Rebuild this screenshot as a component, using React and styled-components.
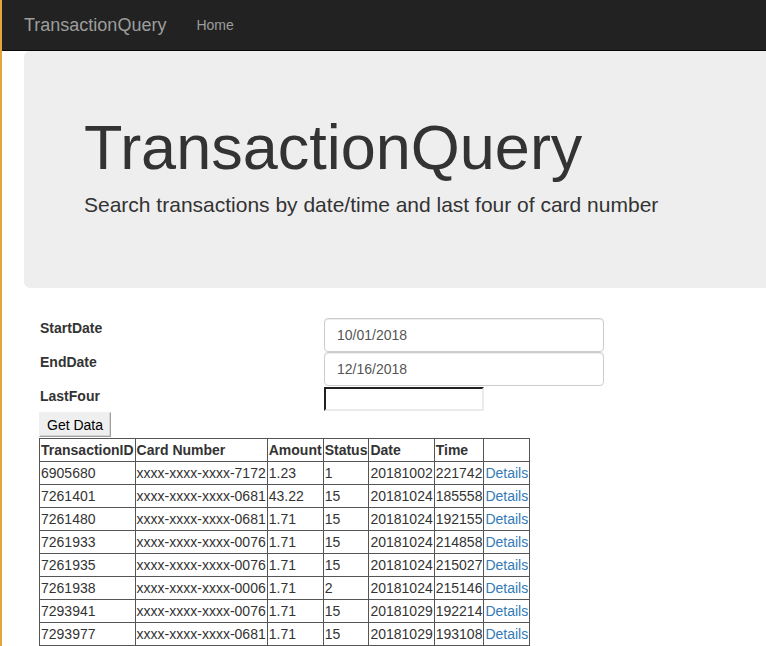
import React from 'react';
import styled, { createGlobalStyle } from 'styled-components';

const GlobalStyle = createGlobalStyle`
  html, body {
    margin: 0;
    padding: 0;
    overflow: hidden;
    background: #fff;
  }
  body {
    font-family: "Liberation Sans", Helvetica, Arial, sans-serif;
    font-size: 14px;
    line-height: 1.42857;
    color: #333;
  }
  * {
    box-sizing: border-box;
  }
`;

const rows = [
  ['6905680', 'xxxx-xxxx-xxxx-7172', '1.23', '1', '20181002', '221742'],
  ['7261401', 'xxxx-xxxx-xxxx-0681', '43.22', '15', '20181024', '185558'],
  ['7261480', 'xxxx-xxxx-xxxx-0681', '1.71', '15', '20181024', '192155'],
  ['7261933', 'xxxx-xxxx-xxxx-0076', '1.71', '15', '20181024', '214858'],
  ['7261935', 'xxxx-xxxx-xxxx-0076', '1.71', '15', '20181024', '215027'],
  ['7261938', 'xxxx-xxxx-xxxx-0006', '1.71', '2', '20181024', '215146'],
  ['7293941', 'xxxx-xxxx-xxxx-0076', '1.71', '15', '20181029', '192214'],
  ['7293977', 'xxxx-xxxx-xxxx-0681', '1.71', '15', '20181029', '193108'],
];

const App = () => {
  return (
    <Page>
      <GlobalStyle />
      <Navbar>
        <Brand href="#">TransactionQuery</Brand>
        <NavLink href="#">Home</NavLink>
      </Navbar>

      <Jumbotron>
        <h1>TransactionQuery</h1>
        <p>Search transactions by date/time and last four of card number</p>
      </Jumbotron>

      <Content>
        <QueryForm>
          <label>StartDate</label>
          <DateInput defaultValue="10/01/2018" />
          <label>EndDate</label>
          <DateInput defaultValue="12/16/2018" />
          <label>LastFour</label>
          <PlainInput />
        </QueryForm>
        <GetButton>Get Data</GetButton>

        <ResultTable>
          <thead>
            <tr>
              <th>TransactionID</th>
              <th>Card Number</th>
              <th>Amount</th>
              <th>Status</th>
              <th>Date</th>
              <th>Time</th>
              <th></th>
            </tr>
          </thead>
          <tbody>
            {rows.map((r) => (
              <tr key={r[0]}>
                {r.map((c, i) => (
                  <td key={i}>{c}</td>
                ))}
                <td>
                  <a href="#">Details</a>
                </td>
              </tr>
            ))}
          </tbody>
        </ResultTable>
      </Content>
    </Page>
  );
};

const Page = styled.div`
  min-height: 100vh;
  border-left: 2px solid #e8a43c;
`;

const Navbar = styled.nav`
  display: flex;
  align-items: center;
  height: 51px;
  padding-left: 7px;
  background: #222;
  border-bottom: 1px solid #080808;
`;

const Brand = styled.a`
  padding: 15px;
  font-size: 18px;
  line-height: 20px;
  color: #9d9d9d;
  text-decoration: none;
`;

const NavLink = styled.a`
  padding: 15px;
  font-size: 14px;
  line-height: 20px;
  color: #9d9d9d;
  text-decoration: none;
`;

const Jumbotron = styled.div`
  margin-left: 22px;
  padding: 48px 60px;
  background: #eee;
  border-radius: 6px 0 0 6px;
  height: 237px;

  h1 {
    margin: 14px 0 8px;
    font-size: 63px;
    font-weight: 500;
    line-height: 1.1;
    color: inherit;
    white-space: nowrap;
  }

  p {
    margin: 0 0 15px;
    font-size: 21px;
    font-weight: 200;
    white-space: nowrap;
  }
`;

const Content = styled.div`
  padding: 30px 0 0 37px;
`;

const QueryForm = styled.div`
  display: grid;
  grid-template-columns: 285px auto;
  justify-content: start;
  align-items: start;

  label {
    font-weight: bold;
    line-height: 20px;
    padding-left: 1px;
  }
`;

const DateInput = styled.input`
  width: 280px;
  height: 34px;
  padding: 6px 12px;
  font-family: inherit;
  font-size: 14px;
  color: #555;
  background: #fff;
  border: 1px solid #ccc;
  border-radius: 4px;
  box-shadow: inset 0 1px 1px rgba(0, 0, 0, 0.075);
  outline: none;
`;

const PlainInput = styled.input`
  width: 160px;
  height: 24px;
  margin-top: 1px;
  padding: 1px 2px;
  font-family: inherit;
  border: 2px inset #ebebeb;
  border-top-color: #767676;
  border-left-color: #767676;
  background: #fff;
  outline: none;
`;

const GetButton = styled.button`
  display: block;
  height: 25px;
  margin-top: 1px;
  margin-bottom: 1px;
  padding: 1px 7px;
  font-family: inherit;
  font-size: 14px;
  color: #000;
  background: #efefef;
  border: 1px solid #efefef;
  border-right-color: #a0a0a0;
  border-bottom-color: #a0a0a0;
  box-shadow: inset -1px -1px 0 #d4d4d4;
`;

const ResultTable = styled.table`
  border-collapse: collapse;
  font-size: 14px;

  th,
  td {
    border: 1px solid #555;
    padding: 1px;
    line-height: 20px;
    text-align: left;
    white-space: nowrap;
  }

  th {
    font-weight: bold;
  }

  a {
    color: #337ab7;
    text-decoration: none;
  }
`;

export default App;
